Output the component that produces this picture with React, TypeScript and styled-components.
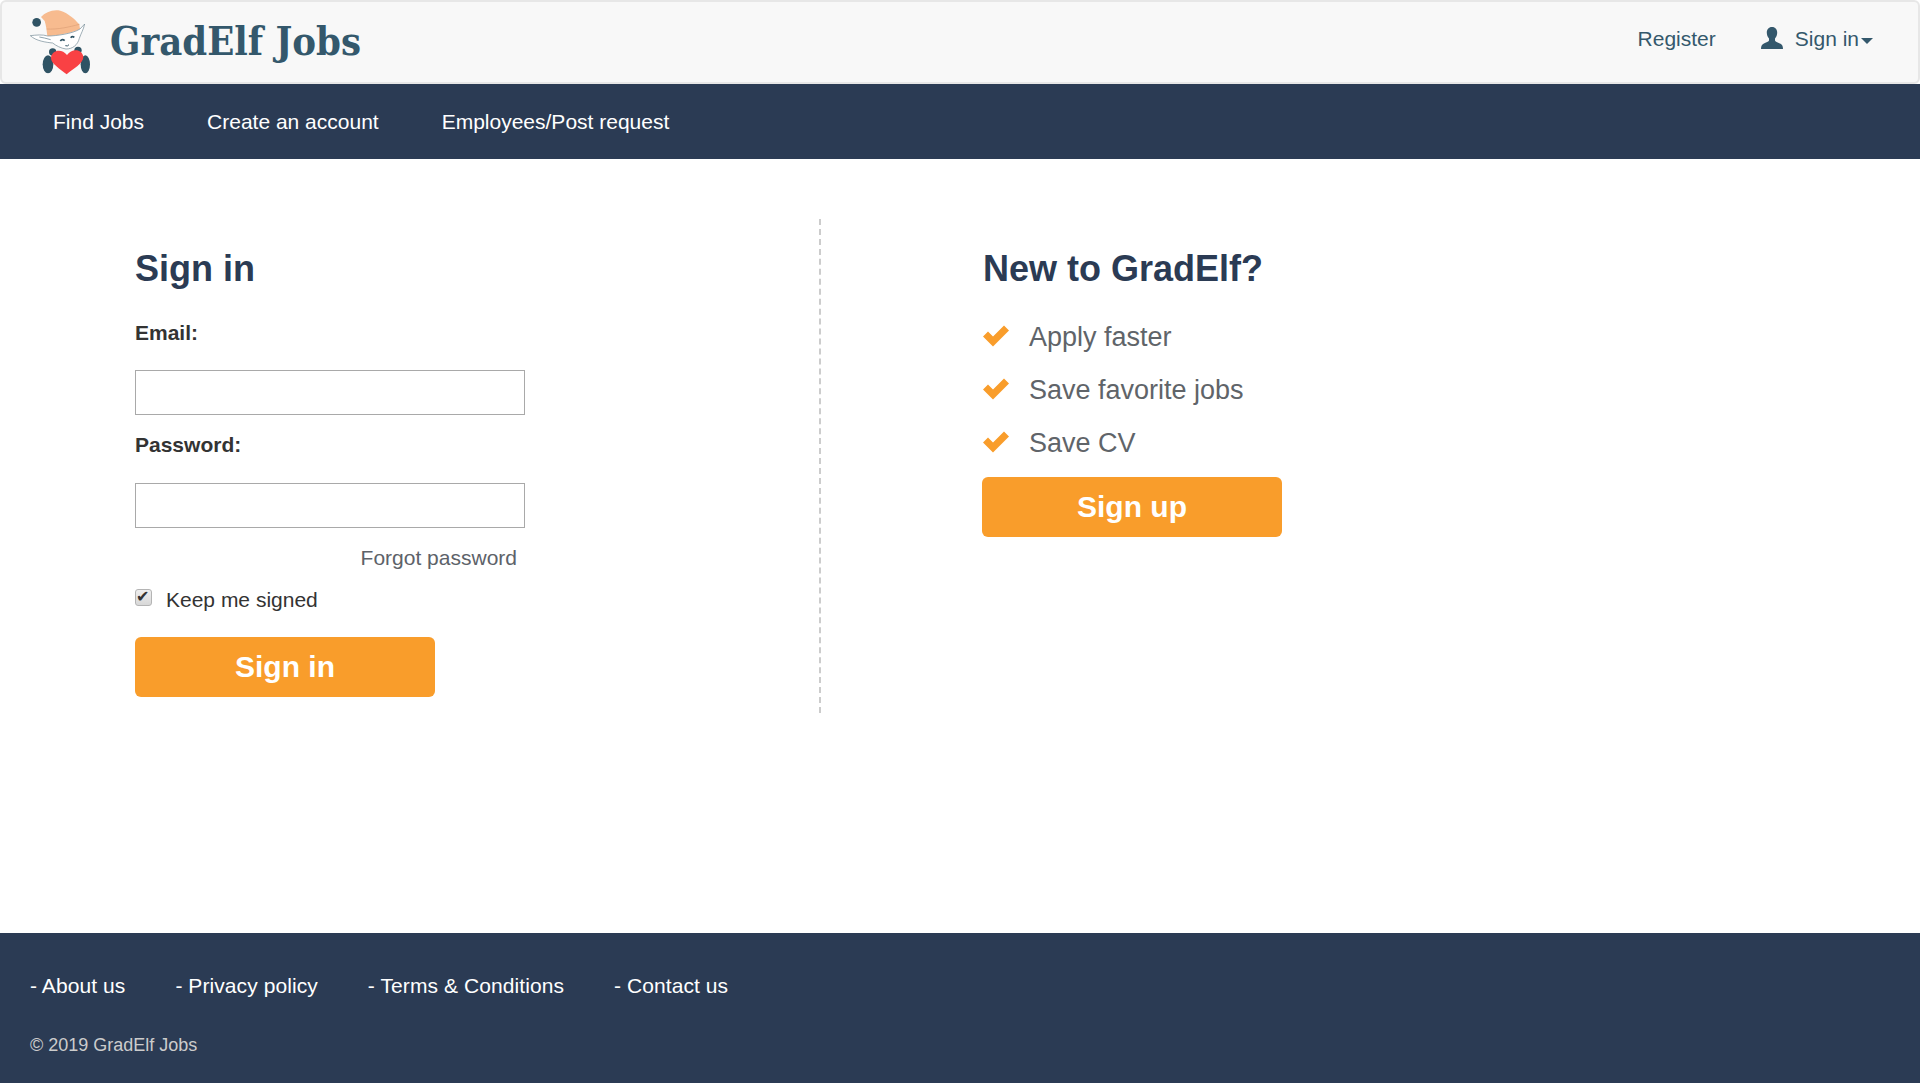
import React from 'react';
import styled, { createGlobalStyle } from 'styled-components';

const GlobalStyle = createGlobalStyle`
  * {
    box-sizing: border-box;
  }
  body {
    margin: 0;
    background: #fff;
    font-family: 'Liberation Sans', Arial, sans-serif;
    font-size: 21px;
    color: #333;
  }
  a {
    text-decoration: none;
  }
`;

const Page = styled.div`
  min-height: 1083px;
  display: flex;
  flex-direction: column;
`;

const TopBar = styled.header`
  height: 84px;
  display: flex;
  align-items: center;
  justify-content: space-between;
  background: #f8f8f8;
  border: 2px solid #e7e7e7;
  border-radius: 6px;
  padding: 0 45px 0 24px;
`;

const Brand = styled.a`
  display: flex;
  align-items: center;
  gap: 18px;
`;

const BrandName = styled.span`
  font-family: 'DejaVu Serif', 'Liberation Serif', serif;
  font-stretch: condensed;
  font-weight: 700;
  font-size: 39.6px;
  margin-top: -3px;
  color: #34586c;
`;

const UserMenu = styled.div`
  display: flex;
  align-items: center;
  gap: 44px;
  margin-top: -6px;
`;

const UserLink = styled.a`
  display: flex;
  align-items: center;
  font-size: 21px;
  color: #34586c;
`;

const UserIcon = styled.svg`
  width: 24px;
  height: 24px;
  margin-right: 11px;
  margin-top: -3px;
  fill: #34586c;
`;

const Caret = styled.span`
  width: 0;
  height: 0;
  margin: 4px 0 0 2px;
  border-left: 6px solid transparent;
  border-right: 6px solid transparent;
  border-top: 6px solid #34586c;
`;

const NavBar = styled.nav`
  height: 75px;
  display: flex;
  align-items: center;
  gap: 63px;
  padding-left: 53px;
  background: #2b3b54;
`;

const NavLink = styled.a`
  font-size: 21px;
  color: #fff;
`;

const Main = styled.main`
  height: 774px;
  padding-top: 60px;
  display: grid;
  grid-template-columns: 821px 1fr;
`;

const SignInColumn = styled.section`
  height: 494px;
  padding: 30px 0 0 135px;
  border-right: 2px dashed #ccc;
`;

const SignUpColumn = styled.section`
  padding: 30px 0 0 162px;
`;

const Heading = styled.h2`
  margin: 0 0 32px;
  font-size: 36px;
  line-height: 40px;
  font-weight: 700;
  color: #2b3b54;
`;

const FieldLabel = styled.label`
  display: block;
  margin-bottom: 26px;
  font-size: 21px;
  line-height: 23px;
  font-weight: 700;
  color: #333;
`;

const PasswordLabel = styled(FieldLabel)`
  margin-top: -1px;
  margin-bottom: 27px;
`;

const TextInput = styled.input`
  display: block;
  width: 390px;
  height: 45px;
  margin-bottom: 19px;
  border: 1px solid #a9a9a9;
  background: #fff;
`;

const ForgotRow = styled.div`
  width: 382px;
  margin-top: -1px;
  text-align: right;
`;

const ForgotLink = styled.a`
  font-size: 21px;
  line-height: 24px;
  color: #5d6269;
`;

const KeepRow = styled.label`
  display: flex;
  align-items: center;
  margin-top: 18px;
  font-size: 21px;
  line-height: 24px;
  color: #333;
`;

const KeepBox = styled.input`
  appearance: none;
  position: relative;
  width: 17px;
  height: 17px;
  margin: -6px 14px 0 0;
  border: 1px solid #b4b4b4;
  border-radius: 3px;
  background: linear-gradient(#eee, #d8d8d8);
  &::after {
    content: '✔';
    position: absolute;
    left: 0;
    top: -2px;
    font-family: 'DejaVu Sans', sans-serif;
    font-size: 16px;
    line-height: 18px;
    color: #333;
  }
`;

const ActionButton = styled.button`
  display: block;
  width: 300px;
  height: 60px;
  border: 0;
  border-radius: 6px;
  background: #f99d2b;
  color: #fff;
  font-family: inherit;
  font-size: 30px;
  font-weight: 700;
`;

const SignInButton = styled(ActionButton)`
  margin-top: 25px;
`;

const SignUpButton = styled(ActionButton)`
  margin-left: -1px;
`;

const Benefits = styled.ul`
  margin: -10px 0 7px;
  padding: 0;
  list-style: none;
`;

const Benefit = styled.li`
  display: flex;
  align-items: center;
  height: 53px;
  font-size: 27px;
  color: #606469;
`;

const Tick = styled.svg`
  width: 26px;
  height: 24px;
  margin-right: 20px;
  margin-top: -3px;
  fill: #f99d2b;
`;

const Footer = styled.footer`
  height: 150px;
  padding: 41px 30px 0;
  background: #2b3b54;
`;

const FooterLinks = styled.div`
  display: flex;
  gap: 50px;
`;

const FooterLink = styled.a`
  font-size: 21px;
  line-height: 24px;
  letter-spacing: 0.08px;
  color: #fff;
`;

const Copyright = styled.p`
  margin: 37px 0 0;
  font-size: 18px;
  line-height: 20px;
  color: #ccc;
`;

const ElfLogo = () => (
  <svg width="66" height="74" viewBox="0 0 198 222">
    <path d="M45 36 C58 22 80 12 103 17 C126 24 146 42 160 58 L162 72 C135 84 95 92 64 93 C62 76 60 60 56 48Z" fill="#f7bb8f" />
    <path d="M62 72 C95 74 130 66 160 58" fill="none" stroke="#dd9f76" strokeWidth="2" />
    <circle cx="32" cy="52" r="13" fill="#2f5364" />
    <path d="M13 92 C30 90 50 88 65 93 C90 93 140 86 162 72 L176 57 C172 75 165 85 160 100 C155 120 140 132 120 132 C105 130 90 122 80 114 C60 112 30 108 13 92Z" fill="#fff" stroke="#6f8792" strokeWidth="2" />
    <path d="M40 96 C50 98 62 100 74 104" fill="none" stroke="#8fa3ad" strokeWidth="3" />
    <path d="M103 108 q6 -8 13 -1 M134 98 q5 -6 11 -1" fill="none" stroke="#2f5364" strokeWidth="5" />
    <path d="M118 122 q7 3 11 -3" fill="none" stroke="#2f5364" strokeWidth="3" />
    <ellipse cx="66" cy="178" rx="16" ry="27" fill="#2f5364" />
    <ellipse cx="178" cy="178" rx="14" ry="27" fill="#2f5364" />
    <circle cx="80" cy="141" r="11" fill="#2f5364" />
    <circle cx="156" cy="136" r="11" fill="#2f5364" />
    <path d="M122 208 C104 192 74 176 75 158 C78 134 108 130 123 150 C138 128 170 132 172 156 C172 176 140 192 122 208Z" fill="#f94144" />
  </svg>
);

const checkPath = 'M0 12 L5 7 L10 12 L21 1 L26 6 L10 22Z';

const benefits = ['Apply faster', 'Save favorite jobs', 'Save CV'];
const navItems = ['Find Jobs', 'Create an account', 'Employees/Post request'];
const footerItems = ['- About us', '- Privacy policy', '- Terms & Conditions', '- Contact us'];

export default function App() {
  return (
    <Page>
      <GlobalStyle />
      <TopBar>
        <Brand>
          <ElfLogo />
          <BrandName>GradElf Jobs</BrandName>
        </Brand>
        <UserMenu>
          <UserLink>Register</UserLink>
          <UserLink>
            <UserIcon viewBox="0 0 24 24">
              <path d="M12 1c-3.400 0-5.200 2.500-5.200 5.800 0 2.200.9 4.300 2.200 5.600v2.200c0 1-3 2-5.500 3.200C2 18.800 1 20 1 23h22c0-3-1-4.200-2.500-5.200-2.500-1.200-5.500-2.200-5.500-3.200v-2.200c1.300-1.300 2.200-3.400 2.200-5.600C17.200 3.500 15.400 1 12 1z" />
            </UserIcon>
            Sign in
            <Caret />
          </UserLink>
        </UserMenu>
      </TopBar>
      <NavBar>
        {navItems.map(item => (
          <NavLink key={item}>{item}</NavLink>
        ))}
      </NavBar>
      <Main>
        <SignInColumn>
          <Heading>Sign in</Heading>
          <FieldLabel htmlFor="email">Email:</FieldLabel>
          <TextInput id="email" type="text" />
          <PasswordLabel htmlFor="password">Password:</PasswordLabel>
          <TextInput id="password" type="password" />
          <ForgotRow>
            <ForgotLink>Forgot password</ForgotLink>
          </ForgotRow>
          <KeepRow>
            <KeepBox type="checkbox" defaultChecked />
            Keep me signed
          </KeepRow>
          <SignInButton>Sign in</SignInButton>
        </SignInColumn>
        <SignUpColumn>
          <Heading>New to GradElf?</Heading>
          <Benefits>
            {benefits.map(item => (
              <Benefit key={item}>
                <Tick viewBox="0 0 26 23">
                  <path d={checkPath} />
                </Tick>
                {item}
              </Benefit>
            ))}
          </Benefits>
          <SignUpButton>Sign up</SignUpButton>
        </SignUpColumn>
      </Main>
      <Footer>
        <FooterLinks>
          {footerItems.map(item => (
            <FooterLink key={item}>{item}</FooterLink>
          ))}
        </FooterLinks>
        <Copyright>© 2019 GradElf Jobs</Copyright>
      </Footer>
    </Page>
  );
}
